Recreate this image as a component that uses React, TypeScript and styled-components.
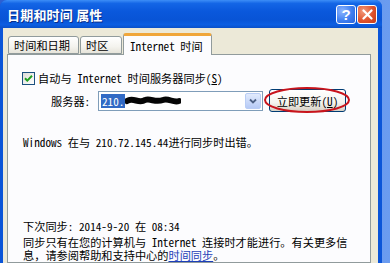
import React from 'react';
import styled, { createGlobalStyle } from 'styled-components';

const FONT = `"Noto Sans Mono CJK SC", "Noto Sans CJK SC", "Liberation Mono", monospace`;

const Global = createGlobalStyle`
  html, body { margin: 0; padding: 0; width: 390px; height: 263px; overflow: hidden; background: linear-gradient(90deg, #2c5fd2, #6b9cf0); }
  #root { width: 390px; height: 263px; }
  * { box-sizing: border-box; }
`;

const Window = styled.div`
  width: 382px;
  height: 263px;
  display: flex;
  flex-direction: column;
  background: #0b55d8;
  border-radius: 7px 7px 0 0;
  overflow: hidden;
  font-family: ${FONT};
  font-size: 11.2px;
  color: #000;
`;

const TitleBar = styled.div`
  height: 28px;
  flex: none;
  display: flex;
  align-items: center;
  padding: 0 5px 0 7px;
  background: linear-gradient(180deg, #3d8ef7 0%, #1466e6 12%, #0a58dc 40%, #0854d6 70%, #0c5ee2 88%, #0a50c8 100%);
`;

const Title = styled.div`
  flex: 1;
  color: #fff;
  font-family: "Noto Sans CJK SC", sans-serif;
  font-weight: 700;
  font-size: 13px;
  letter-spacing: 0.2px;
  text-shadow: 1px 1px 0 #0a2f8a;
`;

const CapButton = styled.div<{ $red?: boolean }>`
  width: 20px;
  height: 19px;
  margin-left: 1px;
  border: 1px solid #fff;
  border-radius: 3px;
  display: flex;
  align-items: center;
  justify-content: center;
  color: #fff;
  font-family: "Liberation Sans", sans-serif;
  font-weight: 700;
  font-size: 15px;
  background: ${p => p.$red
    ? 'radial-gradient(circle at 30% 30%, #f29a7c, #e0532d 55%, #c63a16)'
    : 'radial-gradient(circle at 30% 30%, #8fb6ff, #3f7ff0 55%, #2a63dc)'};
`;

const Frame = styled.div`
  flex: 1;
  display: flex;
  padding: 0 4px 0 3px;
`;

const Face = styled.div`
  flex: 1;
  background: #ece9d8;
  display: flex;
  flex-direction: column;
  padding-top: 5px;
`;

const TabRow = styled.div`
  display: flex;
  align-items: flex-end;
  padding-left: 5px;
  height: 21px;
  position: relative;
  z-index: 1;
`;

const Tab = styled.div<{ $active?: boolean; $w: number }>`
  width: ${p => p.$w}px;
  height: ${p => (p.$active ? '22px' : '18px')};
  margin-bottom: ${p => (p.$active ? '-1px' : '0')};
  padding-left: ${p => (p.$active ? '6px' : '5px')};
  display: flex;
  align-items: center;
  border: 1px solid #919b9c;
  border-bottom: ${p => (p.$active ? 'none' : '1px solid #919b9c')};
  border-top: ${p => (p.$active ? '3px solid #f0a63a' : '1px solid #919b9c')};
  border-radius: 3px 3px 0 0;
  background: ${p => (p.$active ? '#fcfcfe' : 'linear-gradient(180deg, #fff 0%, #f4f3ee 60%, #e6e4da 100%)')};
  margin-right: 1px;
  white-space: pre;
`;

const Panel = styled.div`
  flex: 1;
  margin: 0 7px 0 4px;
  border: 1px solid #919b9c;
  background: #fcfcfe;
  display: flex;
  flex-direction: column;
`;

const CheckRow = styled.div`
  margin-top: 16px;
  padding-left: 14px;
  height: 14px;
  display: flex;
  align-items: center;
  gap: 3px;
  white-space: pre;
`;

const CheckBox = styled.div`
  width: 13px;
  height: 13px;
  border: 1px solid #1c5180;
  background: linear-gradient(135deg, #dcdcd7, #fff);
  display: flex;
  align-items: center;
  justify-content: center;
`;

const ServerRow = styled.div`
  margin-top: 4px;
  height: 23px;
  padding-left: 43px;
  display: flex;
  align-items: center;
`;

const Label = styled.div`
  width: 47px;
`;

const Combo = styled.div`
  width: 165px;
  height: 20px;
  border: 1px solid #7f9db9;
  background: #fff;
  display: flex;
  align-items: center;
  padding: 0 1px 0 2px;
`;

const Selected = styled.span`
  background: #316ac5;
  color: #fff;
  padding: 0 1px;
  line-height: 14px;
`;

const ComboValue = styled.div`
  flex: 1;
  display: flex;
  align-items: center;
`;

const DropBtn = styled.div`
  width: 16px;
  height: 16px;
  border: 1px solid #b9cdf5;
  border-radius: 2px;
  background: linear-gradient(180deg, #e2ebfd, #b6caf6);
  display: flex;
  align-items: center;
  justify-content: center;
`;

const BtnWrap = styled.div`
  position: relative;
  margin-left: 6px;
`;

const Button = styled.div`
  width: 77px;
  height: 23px;
  border: 1px solid #003c74;
  border-radius: 3px;
  background: linear-gradient(180deg, #fff 0%, #f5f4ee 60%, #d6d0c4 100%);
  display: flex;
  align-items: center;
  justify-content: center;
  white-space: pre;
`;

const Ellipse = styled.svg`
  position: absolute;
  left: -6px;
  top: -3px;
  pointer-events: none;
`;

const Line = styled.div<{ $mt: number }>`
  margin-top: ${p => p.$mt}px;
  padding-left: 15px;
  line-height: 13px;
  white-space: pre;
`;

const Para = styled.div`
  margin-top: 3px;
  padding-left: 15px;
  line-height: 13px;
  white-space: pre;
`;

const Link = styled.span`
  color: #1c3fb8;
  text-decoration: underline;
`;

const Key = styled.span`
  text-decoration: underline;
`;

export default function App() {
  return (
    <>
      <Global />
      <Window>
        <TitleBar>
          <Title>日期和时间 属性</Title>
          <CapButton>?</CapButton>
          <CapButton $red>
            <svg width="11" height="11" viewBox="0 0 11 11">
              <path d="M1.5 1.5 L9.5 9.5 M9.5 1.5 L1.5 9.5" stroke="#fff" strokeWidth="2.2" strokeLinecap="round" />
            </svg>
          </CapButton>
        </TitleBar>
        <Frame>
          <Face>
            <TabRow>
              <Tab $w={71}>时间和日期</Tab>
              <Tab $w={42}>时区</Tab>
              <Tab $active $w={89}>Internet 时间</Tab>
            </TabRow>
            <Panel>
              <CheckRow>
                <CheckBox>
                  <svg width="9" height="9" viewBox="0 0 9 9">
                    <path d="M1 4.2 L3.3 6.6 L8 1.8" stroke="#21a121" strokeWidth="2" fill="none" />
                  </svg>
                </CheckBox>
                <span>自动与 Internet 时间服务器同步(<Key>S</Key>)</span>
              </CheckRow>
              <ServerRow>
                <Label>服务器:</Label>
                <Combo>
                  <ComboValue>
                    <Selected>210.</Selected>
                    <svg width="56" height="12" viewBox="0 0 56 12">
                      <path d="M2 6 C8 2 14 9 20 5 C26 3 30 8 38 5 C44 3 48 8 54 6" stroke="#050505" strokeWidth="6" fill="none" strokeLinecap="round" />
                    </svg>
                  </ComboValue>
                  <DropBtn>
                    <svg width="8" height="6" viewBox="0 0 8 6">
                      <path d="M1 1.5 L4 4.5 L7 1.5" stroke="#4d6185" strokeWidth="1.8" fill="none" />
                    </svg>
                  </DropBtn>
                </Combo>
                <BtnWrap>
                  <Button>立即更新(<Key>U</Key>)</Button>
                  <Ellipse width="88" height="28" viewBox="0 0 88 28">
                    <ellipse cx="44" cy="14" rx="42" ry="12" stroke="#c8141c" strokeWidth="2" fill="none" />
                  </Ellipse>
                </BtnWrap>
              </ServerRow>
              <Line $mt={24}>Windows 在与 210.72.145.44进行同步时出错。</Line>
              <Line $mt={71}>下次同步: 2014-9-20 在 08:34</Line>
              <Para>
                {'同步只有在您的计算机与 Internet 连接时才能进行。有关更多信\n息，请参阅帮助和支持中心的'}
                <Link>时间同步</Link>
                {'。'}
              </Para>
            </Panel>
          </Face>
        </Frame>
      </Window>
    </>
  );
}
